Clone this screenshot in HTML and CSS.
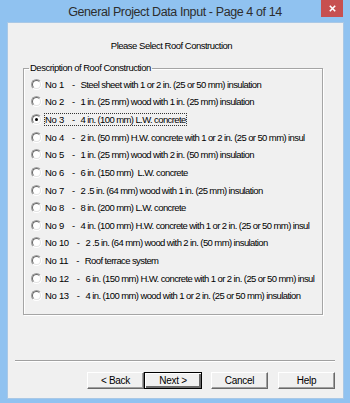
FILE: index.html
```html
<!DOCTYPE html>
<html lang="en">
<head>
    <meta charset="UTF-8">
    <title>General Project Data Input - Page 4 of 14</title>
    <link rel="stylesheet" href="styles.css">
</head>
<body>

    <div class="window">
        <div class="titlebar">
            <span></span>
            <span class="title">General Project Data Input - Page 4 of 14</span>
            <button class="close" aria-label="Close">
                <svg width="7" height="7" viewBox="0 0 7 7"><path d="M0.8 0.8 L6.2 6.2 M6.2 0.8 L0.8 6.2" stroke="#fff" stroke-width="1.6"/></svg>
            </button>
        </div>

        <div class="client">
            <p class="prompt">Please Select Roof Construction</p>

            <fieldset class="group">
                <legend>Description of Roof Construction</legend>
                <label class="option"><span class="radio"></span><span class="text"><span class="num">No 1</span><span class="dash">-</span><span class="desc">Steel sheet with 1 or 2 in. (25 or 50 mm) insulation</span></span></label>
                <label class="option"><span class="radio"></span><span class="text"><span class="num">No 2</span><span class="dash">-</span><span class="desc">1 in. (25 mm) wood with 1 in. (25 mm) insulation</span></span></label>
                <label class="option"><span class="radio checked"></span><span class="text focus"><span class="num">No 3</span><span class="dash">-</span><span class="desc">4 in. (100 mm) L.W. concrete</span></span></label>
                <label class="option"><span class="radio"></span><span class="text"><span class="num">No 4</span><span class="dash">-</span><span class="desc">2 in. (50 mm) H.W. concrete with 1 or 2 in. (25 or 50 mm) insul</span></span></label>
                <label class="option"><span class="radio"></span><span class="text"><span class="num">No 5</span><span class="dash">-</span><span class="desc">1 in. (25 mm) wood with 2 in. (50 mm) insulation</span></span></label>
                <label class="option"><span class="radio"></span><span class="text"><span class="num">No 6</span><span class="dash">-</span><span class="desc">6 in. (150 mm)  L.W. concrete</span></span></label>
                <label class="option"><span class="radio"></span><span class="text"><span class="num">No 7</span><span class="dash">-</span><span class="desc">2 .5 in. (64 mm) wood with 1 in. (25 mm) insulation</span></span></label>
                <label class="option"><span class="radio"></span><span class="text"><span class="num">No 8</span><span class="dash">-</span><span class="desc">8 in. (200 mm) L.W. concrete</span></span></label>
                <label class="option"><span class="radio"></span><span class="text"><span class="num">No 9</span><span class="dash">-</span><span class="desc">4 in. (100 mm) H.W. concrete with 1 or 2 in. (25 or 50 mm) insul</span></span></label>
                <label class="option"><span class="radio"></span><span class="text"><span class="num">No 10</span><span class="dash">-</span><span class="desc">2 .5 in. (64 mm) wood with 2 in. (50 mm) insulation</span></span></label>
                <label class="option"><span class="radio"></span><span class="text"><span class="num">No 11</span><span class="dash">-</span><span class="desc">Roof terrace system</span></span></label>
                <label class="option"><span class="radio"></span><span class="text"><span class="num">No 12</span><span class="dash">-</span><span class="desc">6 in. (150 mm) H.W. concrete with 1 or 2 in. (25 or 50 mm) insul</span></span></label>
                <label class="option"><span class="radio"></span><span class="text"><span class="num">No 13</span><span class="dash">-</span><span class="desc">4 in. (100 mm) wood with 1 or 2 in. (25 or 50 mm) insulation</span></span></label>
            </fieldset>

            <div class="separator"></div>

            <div class="buttons">
                <button class="btn">&lt; Back</button>
                <button class="btn default">Next &gt;</button>
                <button class="btn spaced">Cancel</button>
                <button class="btn spaced">Help</button>
            </div>
        </div>
    </div>

</body>
</html>
```

FILE: styles.css
```css
body {
    margin: 0;
    padding: 0;
    font-family: 'Liberation Sans', Arial, sans-serif;
}
.window {
    width: 350px;
    height: 403px;
    box-sizing: border-box;
    background-color: #90c2f0;
    padding-bottom: 5px;
}
.titlebar {
    display: grid;
    grid-template-columns: 1fr auto 1fr;
    height: 23px;
}
.title {
    font-family: 'Liberation Sans', Arial, sans-serif;
    font-size: 12.5px;
    line-height: 24px;
    color: #2d2d2d;
    letter-spacing: -0.4px;
    white-space: nowrap;
}
.close {
    justify-self: end;
    align-self: start;
    width: 22px;
    height: 17px;
    margin-right: 7px;
    padding: 0;
    border: none;
    background-color: #c75050;
    display: flex;
    justify-content: center;
    align-items: center;
}
.client {
    margin: 0 7px 0 8px;
    height: 375px;
    background-color: #f0f0f0;
    box-shadow: 0 0 0 1px #a9c8e6;
    font-size: 9.5px;
    letter-spacing: -0.5px;
    color: #000;
}
.prompt {
    margin: 0;
    padding: 16px 8px 0 0;
    line-height: 13px;
    text-align: center;
}
.group {
    margin: 9px 0 0 15px;
    width: 300px;
    box-sizing: border-box;
    padding: 0.5px 0 9.5px 7px;
    border: 1px solid #a5a5a5;
    box-shadow: 1px 1px 0 #fff, inset 1px 1px 0 #fff;
}
.group legend {
    padding: 0 1px;
    margin-left: -2px;
    line-height: 14px;
}
.option {
    display: flex;
    align-items: center;
    gap: 3px;
    height: 17.64px;
}
.radio {
    position: relative;
    width: 11px;
    height: 11px;
    box-sizing: border-box;
    border-radius: 50%;
    border: 1px solid;
    border-color: #a0a0a0 #fff #fff #a0a0a0;
    flex: none;
}
.radio::before {
    content: "";
    display: block;
    width: 9px;
    height: 9px;
    box-sizing: border-box;
    border-radius: 50%;
    border: 1px solid;
    border-color: #696969 #e3e3e3 #e3e3e3 #696969;
    background-color: #fff;
}
.radio.checked::after {
    content: "";
    position: absolute;
    left: 3px;
    top: 3px;
    width: 3px;
    height: 3px;
    border-radius: 50%;
    background-color: #000;
}
.text {
    white-space: pre;
    line-height: 11px;
}
.num {
    letter-spacing: -0.3px;
}
.dash {
    margin: 0 6px 0 8px;
}
.desc {
    letter-spacing: -0.6px;
}
.focus {
    outline: 1px dotted #333;
}
.separator {
    margin: 45px 8px 0 7px;
    height: 1px;
    background-color: #a0a0a0;
    border-bottom: 1px solid #fff;
}
.buttons {
    display: flex;
    padding: 10px 8px 0 79px;
}
.btn {
    width: 57px;
    height: 17px;
    padding: 0;
    font-family: inherit;
    font-size: 10px;
    letter-spacing: -0.3px;
    color: #000;
    background-color: #f0f0f0;
    border: 1px solid;
    border-color: #fff #696969 #696969 #fff;
    box-shadow: inset -1px -1px 0 #a0a0a0;
}
.btn.default {
    border: 1px solid #000;
    box-shadow: inset 1px 1px 0 #fff, inset -2px -2px 0 #696969, inset -1px -1px 0 #a0a0a0;
    width: 58px;
}
.btn.spaced {
    margin-left: 9px;
}
.btn.spaced:last-child {
    margin-left: 10px;
}
```
